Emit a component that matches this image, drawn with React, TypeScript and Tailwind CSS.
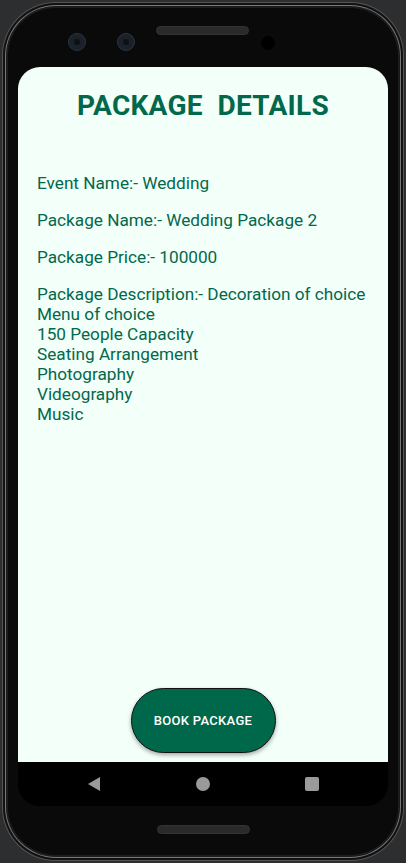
import React from "react";

const green = "text-[#02684b]";

export default function App() {
  const desc = [
    "Package Description:- Decoration of choice",
    "Menu of choice",
    "150 People Capacity",
    "Seating Arrangement",
    "Photography",
    "Videography",
    "Music",
  ];
  return (
    <div className="w-[406px] h-[863px] bg-[#2c2e30] p-[2px] overflow-hidden" style={{ fontFamily: "Roboto, 'Noto Sans', sans-serif" }}>
      <div className="h-full w-full rounded-[54px] bg-[#3a3a3a] p-[1px] shadow-[inset_0_0_0_1px_#555]">
        <div className="h-full w-full rounded-[53px] bg-[#111] p-[2px]">
          <div className="h-full w-full rounded-[51px] bg-[#777] p-[1px]">
            <div className="h-full w-full rounded-[50px] bg-[#1c1c1c] p-[2px]">
              <div className="h-full w-full rounded-[48px] bg-[#0a0a0a] flex flex-col px-[10px]">
                {/* top bezel */}
                <div className="relative h-[59px] shrink-0">
                  <div className="absolute left-[50px] top-[25px] w-[18px] h-[18px] rounded-full bg-[#1a2128] border border-[#2a3540] flex items-center justify-center">
                    <div className="w-[6px] h-[6px] rounded-full bg-[#0d1114]" />
                  </div>
                  <div className="absolute left-[99px] top-[25px] w-[18px] h-[18px] rounded-full bg-[#1a2128] border border-[#2a3540] flex items-center justify-center">
                    <div className="w-[6px] h-[6px] rounded-full bg-[#0d1114]" />
                  </div>
                  <div className="absolute left-[138px] top-[18px] w-[93px] h-[9px] rounded-full bg-[#2a2a2a] border border-[#333]" />
                  <div className="absolute left-[243px] top-[28px] w-[14px] h-[14px] rounded-full bg-[#000]" />
                </div>
                {/* screen */}
                <div className="w-[370px] h-[739px] shrink-0 rounded-[22px] overflow-hidden bg-black flex flex-col">
                  <div className="flex-1 bg-[#f3fff9] flex flex-col">
                    <h1 className={`${green} text-[28px] font-bold text-center mt-[19px] leading-[40px] whitespace-pre tracking-[0.3px]`}>
                      {"PACKAGE  DETAILS"}
                    </h1>
                    <div className={`${green} text-[17.2px] leading-[20px] pl-[19px] mt-[47px] flex flex-col gap-[17px]`}>
                      <p>Event Name:- Wedding</p>
                      <p>Package Name:- Wedding Package 2</p>
                      <p>Package Price:- 100000</p>
                      <div>
                        {desc.map((d) => (
                          <p key={d}>{d}</p>
                        ))}
                      </div>
                    </div>
                    <div className="flex-1" />
                    <div className="flex justify-center mb-[9px]">
                      <button className="w-[145px] h-[65px] rounded-full bg-[#00684a] border border-[#111] text-white text-[13px] font-medium tracking-[0.3px] shadow-[0_2px_4px_rgba(0,0,0,0.35)]">
                        BOOK PACKAGE
                      </button>
                    </div>
                  </div>
                  <div className="h-[44px] shrink-0 bg-black flex items-center justify-between px-[69px]">
                    <svg width="14" height="16" viewBox="0 0 14 16"><polygon points="13,1 13,15 1,8" fill="#9a9a9a" /></svg>
                    <div className="w-[14px] h-[14px] rounded-full bg-[#9a9a9a]" />
                    <div className="w-[14px] h-[14px] rounded-[2px] bg-[#9a9a9a]" />
                  </div>
                </div>
                {/* bottom bezel */}
                <div className="flex-1 flex justify-center pt-[19px]">
                  <div className="w-[93px] h-[9px] rounded-full bg-[#2a2a2a] border border-[#333]" />
                </div>
              </div>
            </div>
          </div>
        </div>
      </div>
    </div>
  );
}
